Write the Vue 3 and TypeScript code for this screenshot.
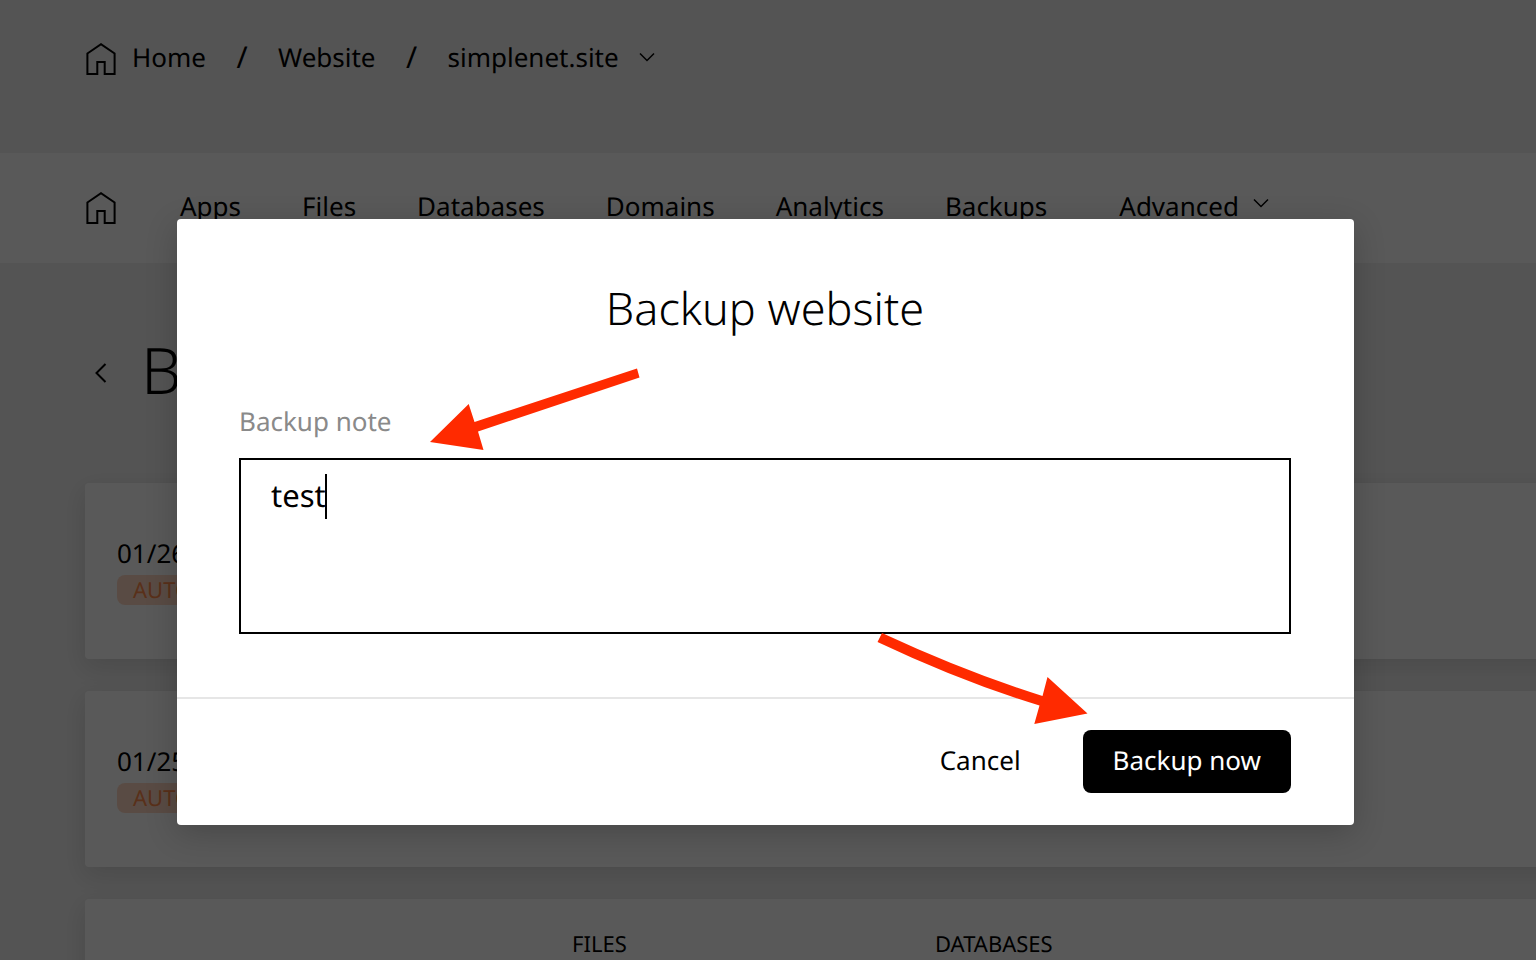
<script setup lang="ts">
import { ref } from 'vue'

interface Backup {
  date: string
  kind: string
}

const navItems: string[] = ['Apps', 'Files', 'Databases', 'Domains', 'Analytics', 'Backups']
const backups: Backup[] = [
  { date: '01/26', kind: 'AUTO' },
  { date: '01/25', kind: 'AUTO' },
]
const note = ref('test')
</script>

<template>
  <div class="page">
    <header class="crumbs">
      <a href="#" class="crumb home">
        <svg class="house" viewBox="0 0 30 32" aria-hidden="true">
          <path d="M1.4 10.5 15 1.2l13.6 9.3V31h-9.9V19h-7.4v12H1.4z" />
        </svg>
        <span>Home</span>
      </a>
      <span class="slash">/</span>
      <a href="#" class="crumb">Website</a>
      <span class="slash">/</span>
      <a href="#" class="crumb site">
        <span>simplenet.site</span>
        <svg class="chevron" viewBox="0 0 16 10" aria-hidden="true"><path d="M1 1.5l7 7 7-7" /></svg>
      </a>
    </header>

    <nav class="nav">
      <a href="#" class="nav-home" aria-label="Home">
        <svg class="house" viewBox="0 0 30 32" aria-hidden="true">
          <path d="M1.4 10.5 15 1.2l13.6 9.3V31h-9.9V19h-7.4v12H1.4z" />
        </svg>
      </a>
      <a v-for="item in navItems" :key="item" href="#" class="nav-text">{{ item }}</a>
      <button type="button" class="advanced nav-text">
        <span>Advanced</span>
        <svg class="chevron" viewBox="0 0 16 10" aria-hidden="true"><path d="M1 1.5l7 7 7-7" /></svg>
      </button>
    </nav>

    <main class="content">
      <div class="heading">
        <a href="#" aria-label="Back">
          <svg class="back" viewBox="0 0 12 20" aria-hidden="true"><path d="M10.500 1 1.500 10l9 9" /></svg>
        </a>
        <h1>B</h1>
      </div>
      <section v-for="b in backups" :key="b.date" class="card">
        <div class="date">{{ b.date }}</div>
        <span class="badge">{{ b.kind }}</span>
      </section>
      <section class="card columns">
        <span>FILES</span>
        <span>DATABASES</span>
      </section>
    </main>

    <div class="overlay">
      <form class="dialog" role="dialog" aria-labelledby="dialog-title" @submit.prevent>
        <div class="body">
          <h2 id="dialog-title">Backup website</h2>
          <label for="note">Backup note</label>
          <div class="field">
            <textarea id="note" v-model="note"></textarea>
            <span class="caret"></span>
          </div>
        </div>
        <footer class="actions">
          <button type="button" class="cancel">Cancel</button>
          <button type="submit" class="primary">Backup now</button>
        </footer>
        <svg class="arrows" viewBox="177 219 1177 606" aria-hidden="true">
          <path d="M430 442 468.700 404 474.500 422 637 368.500 639.500 377.500 478 431.500 483.500 450z" />
          <path d="M882 633Q966 672 1042.500 696L1047.500 677 1087.500 713.500 1034.300 724 1039.500 705.500Q962 682 877.500 642z" />
        </svg>
      </form>
    </div>
  </div>
</template>

<style>
body {
  margin: 0;
}
</style>

<style scoped>
.page {
  position: relative;
  height: 100vh;
  overflow: hidden;
  background: #f0f0f0;
  color: #000;
  font-family: "Noto Sans", "Open Sans", sans-serif;
  font-size: 26px;
  line-height: 36px;
  text-rendering: geometricPrecision;
}
* {
  box-sizing: border-box;
}
a {
  color: inherit;
  text-decoration: none;
}
button {
  padding: 0;
  border: 0;
  background: none;
  color: inherit;
  font: inherit;
  text-rendering: inherit;
}
svg {
  display: block;
  fill: none;
  stroke: #000;
}
.house {
  width: 30px;
  height: 32px;
  stroke-width: 2;
}
.chevron {
  width: 16px;
  height: 10px;
  stroke-width: 1.5;
}
.crumbs {
  display: flex;
  align-items: flex-start;
  height: 153px;
  padding: 39px 86px 0;
}
.home {
  display: flex;
  gap: 16px;
}
.home .house {
  margin-top: 4px;
}
.slash {
  width: 72px;
  text-align: center;
  font-size: 30px;
}
.site {
  display: flex;
  align-items: center;
  gap: 20px;
}
.nav {
  display: flex;
  align-items: center;
  gap: 61px;
  height: 110px;
  padding: 0 86px;
  background: #fff;
}
.nav-home {
  margin-right: 3px;
}
.nav-text {
  padding-bottom: 4px;
}
.advanced {
  display: flex;
  align-items: center;
  gap: 14px;
  margin-left: 11px;
}
.advanced .chevron {
  margin-bottom: 6px;
}
.content {
  display: flex;
  flex-direction: column;
  gap: 32px;
  margin-right: -32px;
  padding-left: 85px;
}
.heading {
  display: flex;
  align-items: center;
  gap: 34px;
  height: 188px;
  padding-left: 10px;
}
.back {
  width: 12px;
  height: 20px;
  margin-top: 31px;
  stroke-width: 2;
}
h1 {
  margin: 26px 0 0;
  font-size: 64px;
  font-weight: 300;
  line-height: 88px;
}
.card {
  height: 176px;
  padding: 52px 32px 0;
  border-radius: 4px;
  background: #fff;
  box-shadow: 0 8px 24px rgba(0, 0, 0, 0.12);
}
.date {
  margin-bottom: 4px;
}
.badge {
  display: block;
  width: fit-content;
  padding: 0 16px;
  border-radius: 8px;
  background: #ffd8c4;
  color: #ff8a4a;
  font-size: 22px;
  line-height: 30px;
}
.columns {
  display: grid;
  grid-template-columns: 363px 1fr;
  padding: 27px 32px 0 487px;
  font-size: 22px;
}
.overlay {
  position: absolute;
  inset: 0;
  padding: 219px 182px 0 177px;
  background: rgba(0, 0, 0, 0.65);
}
.dialog {
  position: relative;
  border-radius: 4px;
  background: #fff;
  box-shadow: 0 8px 32px rgba(0, 0, 0, 0.2);
}
.body {
  padding: 58px 63px 63px 62px;
}
h2 {
  margin: 0 0 62px;
  text-align: center;
  font-size: 45px;
  font-weight: 300;
  line-height: 64px;
}
label {
  display: block;
  margin-bottom: 19px;
  color: #8a8a8a;
}
.field {
  position: relative;
}
textarea {
  display: block;
  width: 100%;
  height: 176px;
  padding: 14px 30px;
  border: 2px solid #000;
  border-radius: 0;
  outline: 0;
  background: #fff;
  color: #000;
  font: inherit;
  font-size: 31px;
  line-height: 44px;
  text-rendering: inherit;
  resize: none;
}
.caret {
  position: absolute;
  top: 16px;
  left: 86px;
  width: 2px;
  height: 45px;
  background: #000;
}
.actions {
  display: flex;
  justify-content: flex-end;
  gap: 62px;
  padding: 31px 63px 32px;
  border-top: 2px solid #e6e6e6;
}
.actions button {
  height: 63px;
  padding-bottom: 4px;
}
.actions .primary {
  padding: 0 30px 4px;
  border-radius: 8px;
  background: #000;
  color: #fff;
}
.arrows {
  position: absolute;
  inset: 0;
  width: 100%;
  height: 100%;
  fill: #ff2a00;
  stroke: none;
  pointer-events: none;
}
</style>
